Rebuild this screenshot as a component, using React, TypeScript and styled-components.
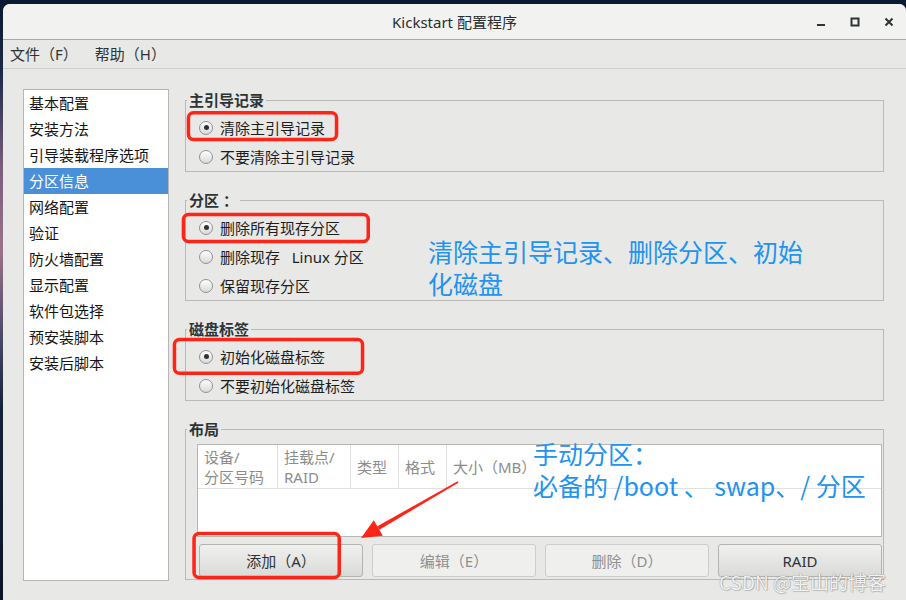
import React from "react";
import styled, { createGlobalStyle } from "styled-components";

const GlobalStyle = createGlobalStyle`
  html, body { margin: 0; padding: 0; }
  body {
    width: 906px;
    height: 600px;
    overflow: hidden;
    background: linear-gradient(180deg, #0b1a30 0%, #1c2a48 12%, #7b5d7e 28%, #9a7289 42%, #4b4a6a 56%, #14223a 68%, #0a1526 100%);
    font-family: "Noto Sans", "Noto Sans CJK SC", sans-serif;
  }
  * { box-sizing: border-box; }
`;

const Page = styled.div`
  position: relative;
  width: 906px;
  height: 600px;
  padding: 4px 0 0 3px;
`;

const Window = styled.div`
  width: 903px;
  height: 596px;
  display: flex;
  flex-direction: column;
  background: #e8e8e7;
  border-radius: 7px 7px 0 0;
  overflow: hidden;
`;

const TitleBar = styled.div`
  height: 36px;
  display: grid;
  grid-template-columns: 1fr auto 1fr;
  align-items: center;
  background: #f2f2f1;
  border-bottom: 1px solid #a9a9a7;
`;

const Title = styled.div`
  grid-column: 2;
  font-size: 15px;
  color: #2b2e2f;
`;

const Controls = styled.div`
  grid-column: 3;
  justify-self: end;
  display: flex;
  height: 100%;
`;

const CtrlButton = styled.div`
  width: 34px;
  height: 100%;
  display: flex;
  align-items: center;
  justify-content: center;
  color: #2e3436;
`;

const MenuBar = styled.div`
  height: 29px;
  display: flex;
  align-items: center;
  gap: 17px;
  padding: 0 0 1px 7px;
  border-bottom: 1px solid #cfcfcd;
`;

const MenuItem = styled.span`
  font-size: 15px;
  color: #2e3436;
`;

const Content = styled.div`
  flex: 1;
  display: grid;
  grid-template-columns: 146px 699px;
  column-gap: 16px;
  align-items: start;
  padding: 20px 0 0 20px;
`;

const Sidebar = styled.ul`
  height: 492px;
  margin: 0;
  padding: 0;
  list-style: none;
  border: 1px solid #b6b6b4;
  background: #fff;
`;

const SideItem = styled.li<{ $selected?: boolean }>`
  height: 26px;
  display: flex;
  align-items: center;
  padding: 0 0 2px 5px;
  font-size: 15px;
  color: ${(p) => (p.$selected ? "#fff" : "#151515")};
  background: ${(p) => (p.$selected ? "#4a90d9" : "transparent")};
`;

const RightCol = styled.div`
  display: flex;
  flex-direction: column;
  gap: 19px;
  margin-top: 2px;
`;

const Frame = styled.fieldset`
  margin: 0;
  min-width: 0;
  padding: 4px 0 0 0;
  border: 1px solid #b9b9b7;
`;

const Legend = styled.legend`
  margin-left: 1px;
  padding: 0 2px;
  font-size: 15px;
  line-height: 18px;
  font-weight: bold;
  color: #2e3436;
`;

const RadioRow = styled.div`
  height: 29px;
  display: flex;
  align-items: center;
  gap: 7px;
  padding-left: 13px;
`;

const RadioCircle = styled.span<{ $checked?: boolean }>`
  width: 14px;
  height: 14px;
  border-radius: 50%;
  border: 1px solid #939393;
  background: linear-gradient(180deg, #ffffff 0%, #d9d9d9 100%);
  display: flex;
  align-items: center;
  justify-content: center;
  &::after {
    content: "";
    width: 5px;
    height: 5px;
    border-radius: 50%;
    background: #2e3436;
    display: ${(p) => (p.$checked ? "block" : "none")};
  }
`;

const RadioLabel = styled.span`
  font-size: 15px;
  color: #1d1d1d;
  white-space: pre;
`;

const LayoutBody = styled.div`
  padding: 2px 1px 2px 11px;
`;

const Table = styled.div`
  height: 93px;
  border: 1px solid #b6b6b4;
  background: #fff;
`;

const HeaderRow = styled.div`
  height: 44px;
  display: grid;
  grid-template-columns: 80px 73px 48px 48px 1fr;
  border-bottom: 1px solid #e0e0e0;
`;

const HeaderCell = styled.div<{ $last?: boolean }>`
  display: flex;
  align-items: center;
  padding: 0 6px;
  font-size: 15px;
  line-height: 20px;
  color: #8c8c8c;
  border-right: ${(p) => (p.$last ? "none" : "1px solid #e0e0e0")};
`;

const ButtonRow = styled.div`
  display: grid;
  grid-template-columns: repeat(4, 1fr);
  gap: 9px;
  margin-top: 7px;
  padding-left: 2px;
`;

const Button = styled.div<{ $disabled?: boolean }>`
  height: 33px;
  display: flex;
  align-items: center;
  justify-content: center;
  font-size: 15px;
  border-radius: 3px;
  border: 1px solid ${(p) => (p.$disabled ? "#cdcdcb" : "#b3b3b0")};
  color: ${(p) => (p.$disabled ? "#8d9091" : "#2e3436")};
  background: ${(p) =>
    p.$disabled ? "#efefee" : "linear-gradient(180deg, #f0f0ef 0%, #dadad8 100%)"};
`;

const Overlay = styled.svg`
  position: absolute;
  left: 0;
  top: 0;
  width: 906px;
  height: 600px;
  pointer-events: none;
`;

const Note = styled.div<{ $x: number; $y: number }>`
  position: absolute;
  left: ${(p) => p.$x}px;
  top: ${(p) => p.$y}px;
  font-family: "Noto Sans CJK SC", "Noto Sans", sans-serif;
  font-size: 25px;
  line-height: 32px;
  color: #2193f0;
  white-space: pre;
`;

const Watermark = styled.div`
  position: absolute;
  left: 719px;
  top: 572px;
  font-family: "Noto Sans CJK SC", "Noto Sans", sans-serif;
  font-size: 19px;
  line-height: 19px;
  color: rgba(255, 255, 255, 0.92);
  text-shadow: 0 0 1px rgba(0, 0, 0, 0.5), 1px 1px 1px rgba(0, 0, 0, 0.15);
  white-space: pre;
`;

const sideItems = [
  "基本配置",
  "安装方法",
  "引导装载程序选项",
  "分区信息",
  "网络配置",
  "验证",
  "防火墙配置",
  "显示配置",
  "软件包选择",
  "预安装脚本",
  "安装后脚本",
];

type RadioProps = { label: string; checked?: boolean };
const Radio = ({ label, checked }: RadioProps) => (
  <RadioRow>
    <RadioCircle $checked={checked} />
    <RadioLabel>{label}</RadioLabel>
  </RadioRow>
);

const redBoxes = [
  { l: 186.7, r: 338.3, t: 111, b: 141.3 },
  { l: 181.7, r: 370, t: 212.7, b: 243.3 },
  { l: 172.7, r: 364.3, t: 337.7, b: 375 },
  { l: 192.3, r: 341, t: 531.7, b: 579.3 },
];

export default function App() {
  return (
    <>
      <GlobalStyle />
      <Page>
        <Window>
          <TitleBar>
            <Title>Kickstart 配置程序</Title>
            <Controls>
              <CtrlButton>
                <svg width="10" height="10" viewBox="0 0 10 10">
                  <line x1="1" y1="8" x2="9" y2="8" stroke="currentColor" strokeWidth="2" />
                </svg>
              </CtrlButton>
              <CtrlButton>
                <svg width="10" height="10" viewBox="0 0 10 10">
                  <rect x="1.5" y="1.5" width="7" height="7" fill="none" stroke="currentColor" strokeWidth="2" />
                </svg>
              </CtrlButton>
              <CtrlButton>
                <svg width="10" height="10" viewBox="0 0 10 10">
                  <path d="M1.5 1.5 L8.5 8.5 M8.5 1.5 L1.5 8.5" stroke="currentColor" strokeWidth="2" />
                </svg>
              </CtrlButton>
            </Controls>
          </TitleBar>
          <MenuBar>
            <MenuItem>文件（F）</MenuItem>
            <MenuItem>帮助（H）</MenuItem>
          </MenuBar>
          <Content>
            <Sidebar>
              {sideItems.map((s) => (
                <SideItem key={s} $selected={s === "分区信息"}>
                  {s}
                </SideItem>
              ))}
            </Sidebar>
            <RightCol>
              <Frame>
                <Legend>主引导记录</Legend>
                <Radio label="清除主引导记录" checked />
                <Radio label="不要清除主引导记录" />
              </Frame>
              <Frame>
                <Legend>分区 ：</Legend>
                <Radio label="删除所有现存分区" checked />
                <Radio label={"删除现存\u00a0\u00a0 Linux 分区"} />
                <Radio label="保留现存分区" />
              </Frame>
              <Frame>
                <Legend>磁盘标签</Legend>
                <Radio label="初始化磁盘标签" checked />
                <Radio label="不要初始化磁盘标签" />
              </Frame>
              <Frame>
                <Legend>布局</Legend>
                <LayoutBody>
                  <Table>
                    <HeaderRow>
                      <HeaderCell>设备/<br />分区号码</HeaderCell>
                      <HeaderCell>挂载点/<br />RAID</HeaderCell>
                      <HeaderCell>类型</HeaderCell>
                      <HeaderCell>格式</HeaderCell>
                      <HeaderCell $last>大小（MB）</HeaderCell>
                    </HeaderRow>
                  </Table>
                  <ButtonRow>
                    <Button>添加（A）</Button>
                    <Button $disabled>编辑（E）</Button>
                    <Button $disabled>删除（D）</Button>
                    <Button>RAID</Button>
                  </ButtonRow>
                </LayoutBody>
              </Frame>
            </RightCol>
          </Content>
        </Window>

        <Overlay viewBox="0 0 906 600">
          {redBoxes.map((b, i) => (
            <rect
              key={i}
              x={b.l + 1.75}
              y={b.t + 1.75}
              width={b.r - b.l - 3.5}
              height={b.b - b.t - 3.5}
              rx="5"
              fill="none"
              stroke="#ff2418"
              strokeWidth="3.5"
            />
          ))}
          <polygon points="458.4,482.7 457.6,481.3 377.3,526.3 379.3,529.7" fill="#ff2418" />
          <polygon points="361,538 373.8,520.2 382.8,535.8" fill="#ff2418" />
        </Overlay>

        <Note $x={428} $y={235}>{"清除主引导记录、删除分区、初始\n化磁盘"}</Note>
        <Note $x={533} $y={437}>{"手动分区：\n必备的 /boot 、 swap、/ 分区"}</Note>
        <Watermark>CSDN @宝山的博客</Watermark>
      </Page>
    </>
  );
}
